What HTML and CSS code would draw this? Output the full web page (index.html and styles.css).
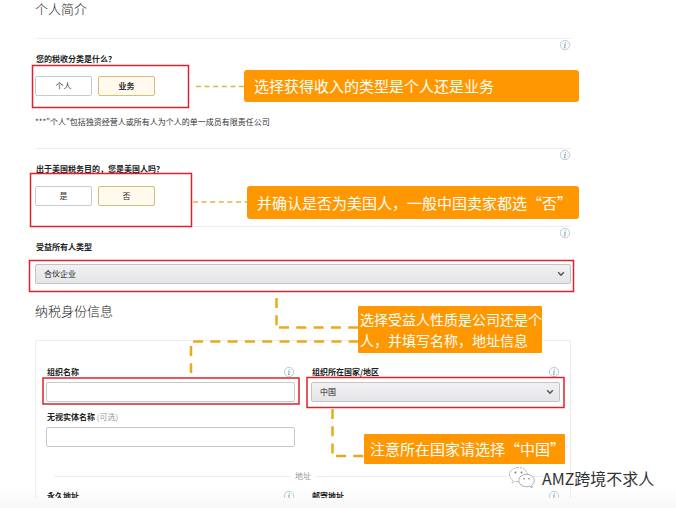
FILE: index.html
```html
<!DOCTYPE html>
<html lang="zh-CN">
<head>
    <meta charset="UTF-8">
    <meta name="viewport" content="width=device-width, initial-scale=1.0">
    <title>个人简介</title>
    <link rel="stylesheet" href="styles.css">
</head>
<body>
    <svg class="symbols" width="0" height="0">
        <symbol id="info" viewBox="0 0 12 12">
            <circle cx="6" cy="6" r="4.7" fill="#f8fcfd" stroke="#b3c8d1" stroke-width="0.9"/>
            <path d="M6.7 3.1 L6.5 3.9 M5.2 5.2 H6.3 L5.6 8.6 M4.9 8.7 H6.5" fill="none" stroke="#87a5b3" stroke-width="1"/>
        </symbol>
        <symbol id="arrow" viewBox="0 0 8 6">
            <path d="M1.2 1.2 L4 4.2 L6.8 1.2" fill="none" stroke="#555" stroke-width="1.5"/>
        </symbol>
    </svg>
    <main class="page">
        <form class="form">
            <h1 class="title">个人简介</h1>
            <section class="question">
                <svg class="info"><use href="#info"/></svg>
                <p class="label">您的税收分类是什么？</p>
                <div class="choices">
                    <button type="button" class="choice">个人</button>
                    <button type="button" class="choice selected bold">业务</button>
                </div>
                <p class="note">***"个人"包括独资经营人或所有人为个人的单一成员有限责任公司</p>
            </section>
            <section class="question">
                <svg class="info"><use href="#info"/></svg>
                <p class="label">出于美国税务目的，您是美国人吗？</p>
                <div class="choices">
                    <button type="button" class="choice">是</button>
                    <button type="button" class="choice selected">否</button>
                </div>
            </section>
            <section class="question">
                <svg class="info"><use href="#info"/></svg>
                <label class="label" for="owner">受益所有人类型</label>
                <div class="select">
                    <select id="owner"><option>合伙企业</option></select>
                    <svg class="arrow"><use href="#arrow"/></svg>
                </div>
            </section>

            <h2 class="title">纳税身份信息</h2>
            <div class="card">
                <div class="columns">
                    <div class="field">
                        <div class="field-head">
                            <label class="label" for="org">组织名称</label>
                            <svg class="info"><use href="#info"/></svg>
                        </div>
                        <input type="text" id="org" class="text">
                    </div>
                    <div class="field">
                        <div class="field-head">
                            <label class="label" for="country">组织所在国家/地区</label>
                            <svg class="info"><use href="#info"/></svg>
                        </div>
                        <div class="select">
                            <select id="country"><option>中国</option></select>
                            <svg class="arrow"><use href="#arrow"/></svg>
                        </div>
                    </div>
                    <div class="field">
                        <div class="field-head">
                            <label class="label" for="entity">无视实体名称 <span class="optional">(可选)</span></label>
                        </div>
                        <input type="text" id="entity" class="text">
                    </div>
                </div>
                <div class="divider"><span>地址</span></div>
                <div class="columns address">
                    <div class="field-head">
                        <p class="label">永久地址</p>
                        <svg class="info"><use href="#info"/></svg>
                    </div>
                    <div class="field-head">
                        <p class="label">邮寄地址</p>
                        <svg class="info"><use href="#info"/></svg>
                    </div>
                </div>
            </div>
        </form>

        <!-- guide marks laid over the form -->
        <svg class="marks" width="676" height="508">
            <g fill="none" stroke="#e0202a" stroke-width="1.5">
                <rect x="32.5" y="65.5" width="156" height="42"/>
                <rect x="30.5" y="173.5" width="161" height="53"/>
                <rect x="29.5" y="260.5" width="544" height="31"/>
                <rect x="43" y="378" width="256" height="26"/>
                <rect x="307" y="377.5" width="257" height="30"/>
            </g>
            <g fill="none" stroke="#dfb544" stroke-width="1.5" stroke-dasharray="5 3.6">
                <path d="M196 86.5 H244"/>
                <path d="M193 202 H247"/>
            </g>
            <g fill="none" stroke="#e8ab1c" stroke-width="2.5" stroke-dasharray="10 7.3">
                <path d="M276.500 298 V327"/>
                <path d="M279 327.500 H358"/>
                <path d="M193 341.500 H358"/>
                <path d="M191 346 V373"/>
                <path d="M332.500 409 V454"/>
                <path d="M336 456 H364"/>
            </g>
        </svg>
        <p class="callout callout-type">选择获得收入的类型是个人还是业务</p>
        <p class="callout callout-us">并确认是否为美国人，一般中国卖家都选“否”</p>
        <p class="callout callout-owner">选择受益人性质是公司还是个<br>人，并填写名称，地址信息</p>
        <p class="callout callout-country">注意所在国家请选择“中国”</p>
        <div class="account">
            <svg width="28" height="24" viewBox="0 0 28 24" fill="#fff" stroke="#999" stroke-width="0.8">
                <path d="M10.500 1.500 C5 1.500 1.500 4.800 1.500 8.700 C1.500 11 2.800 13 4.800 14.300 L4 17 L7.200 15.300 C8.200 15.600 9.500 15.800 11 15.700 C17 15.500 19.500 12 19.300 8.300 C19 4.500 15.500 1.500 10.500 1.500 Z" stroke-dasharray="2 1"/>
                <path d="M18.500 8.300 C14 8.300 10.800 11 10.800 14.500 C10.800 18 14 20.700 18.500 20.700 C19.600 20.700 20.600 20.500 21.500 20.200 L24.200 21.800 L23.500 19.200 C25.300 18 26.300 16.400 26.300 14.500 C26.300 11 23 8.300 18.500 8.300 Z"/>
                <g fill="#777" stroke="none">
                    <circle cx="7.500" cy="6.500" r="0.900"/>
                    <circle cx="13.500" cy="6.500" r="0.900"/>
                    <circle cx="16" cy="12.800" r="0.800"/>
                    <circle cx="21" cy="12.800" r="0.800"/>
                </g>
            </svg>
            <span>AMZ跨境不求人</span>
        </div>
    </main>
</body>
</html>
```
FILE: styles.css
```css
* {
    box-sizing: border-box;
}
body {
    margin: 0;
    background-color: #fafafa;
    font-family: "Noto Sans CJK SC", sans-serif;
    font-size: 8px;
    line-height: 12px;
    color: #333;
}
h1, h2, p {
    margin: 0;
}
.symbols {
    position: absolute;
}
.page {
    position: relative;
    background: linear-gradient(#fff 96%, #f8f8f8);
    padding-bottom: 9px;
}
.form {
    padding: 0 105px 0 35px;
}
.title {
    font-size: 13px;
    font-weight: 300;
    line-height: 18px;
    color: #222;
}
h1.title {
    margin-bottom: 20px;
}
h2.title {
    margin: 18px 0 20px;
}
.question {
    display: flex;
    flex-direction: column;
    border-top: 1px solid #eee;
}
.question + .question {
    margin-top: 20px;
}
.question .note {
    margin: 20px 0 0;
}
.info {
    flex: none;
    width: 12px;
    height: 12px;
}
.question .info {
    align-self: flex-end;
}
.label {
    font-family: "Noto Sans CJK TC", "Noto Sans CJK SC", sans-serif;
    font-weight: 700;
    color: #222;
}
.question .label {
    margin: 2px 0 11px 1px;
}
.choices {
    display: flex;
    gap: 6px;
}
.choice {
    width: 57px;
    height: 20px;
    padding: 0;
    border: 1px solid #c8cacd;
    border-radius: 2px;
    background-color: #fff;
    font: inherit;
    color: #333;
}
.choice.selected {
    border-color: #d0c07c;
    background-color: #fff9ee;
}
.choice.bold {
    font-weight: 700;
}
.select {
    position: relative;
}
select {
    display: block;
    appearance: none;
    width: 100%;
    height: 20px;
    padding: 0 8px;
    border: 1px solid #c2c4c8;
    border-radius: 2px;
    background: linear-gradient(#f1f1f3, #e6e6e9);
    font: inherit;
    color: #222;
}
.arrow {
    position: absolute;
    right: 6px;
    top: 7px;
    width: 8px;
    height: 6px;
}
.card {
    height: 158px;
    overflow: hidden;
    padding: 25px 10px 0;
    border: 1px solid #eee;
    border-bottom: none;
}
.columns {
    display: grid;
    grid-template-columns: 1fr 1fr;
    gap: 9px 16px;
}
.field-head {
    display: flex;
    justify-content: space-between;
    padding-left: 1px;
    margin-bottom: 4px;
}
.text {
    display: block;
    width: 100%;
    height: 20px;
    padding: 0 8px;
    border: 1px solid #c6c9cc;
    border-radius: 2px;
    background-color: #fff;
    font: inherit;
}
.optional {
    font-weight: 400;
    color: #999;
}
.divider {
    display: flex;
    align-items: center;
    gap: 4px;
    margin: 23px 8px 8px;
    color: #999;
}
.divider::before, .divider::after {
    content: "";
    flex: 1;
    border-top: 1px solid #eee;
}
.marks {
    position: absolute;
    left: 0;
    top: 0;
    pointer-events: none;
}
.callout {
    position: absolute;
    border-radius: 3px;
    background-color: #ff9800;
    font-size: 15px;
    color: #fff;
    white-space: nowrap;
}
.callout-type {
    left: 244px;
    top: 70px;
    width: 335px;
    padding-left: 10px;
    line-height: 32px;
}
.callout-us {
    left: 247px;
    top: 186px;
    width: 332px;
    padding-left: 10px;
    line-height: 33px;
}
.callout-owner {
    left: 358px;
    top: 306px;
    width: 184px;
    padding: 3px 0 2px 2px;
    border-radius: 1px;
    font-size: 14px;
    line-height: 21px;
}
.callout-country {
    left: 364px;
    top: 434px;
    width: 201px;
    padding-left: 6px;
    border-radius: 1px;
    line-height: 30px;
}
.account {
    position: absolute;
    left: 508px;
    top: 466px;
    display: flex;
    align-items: center;
    gap: 6px;
    font-size: 16px;
    line-height: 24px;
    color: #333;
    text-shadow: 0 0 2px #fff;
}
```
